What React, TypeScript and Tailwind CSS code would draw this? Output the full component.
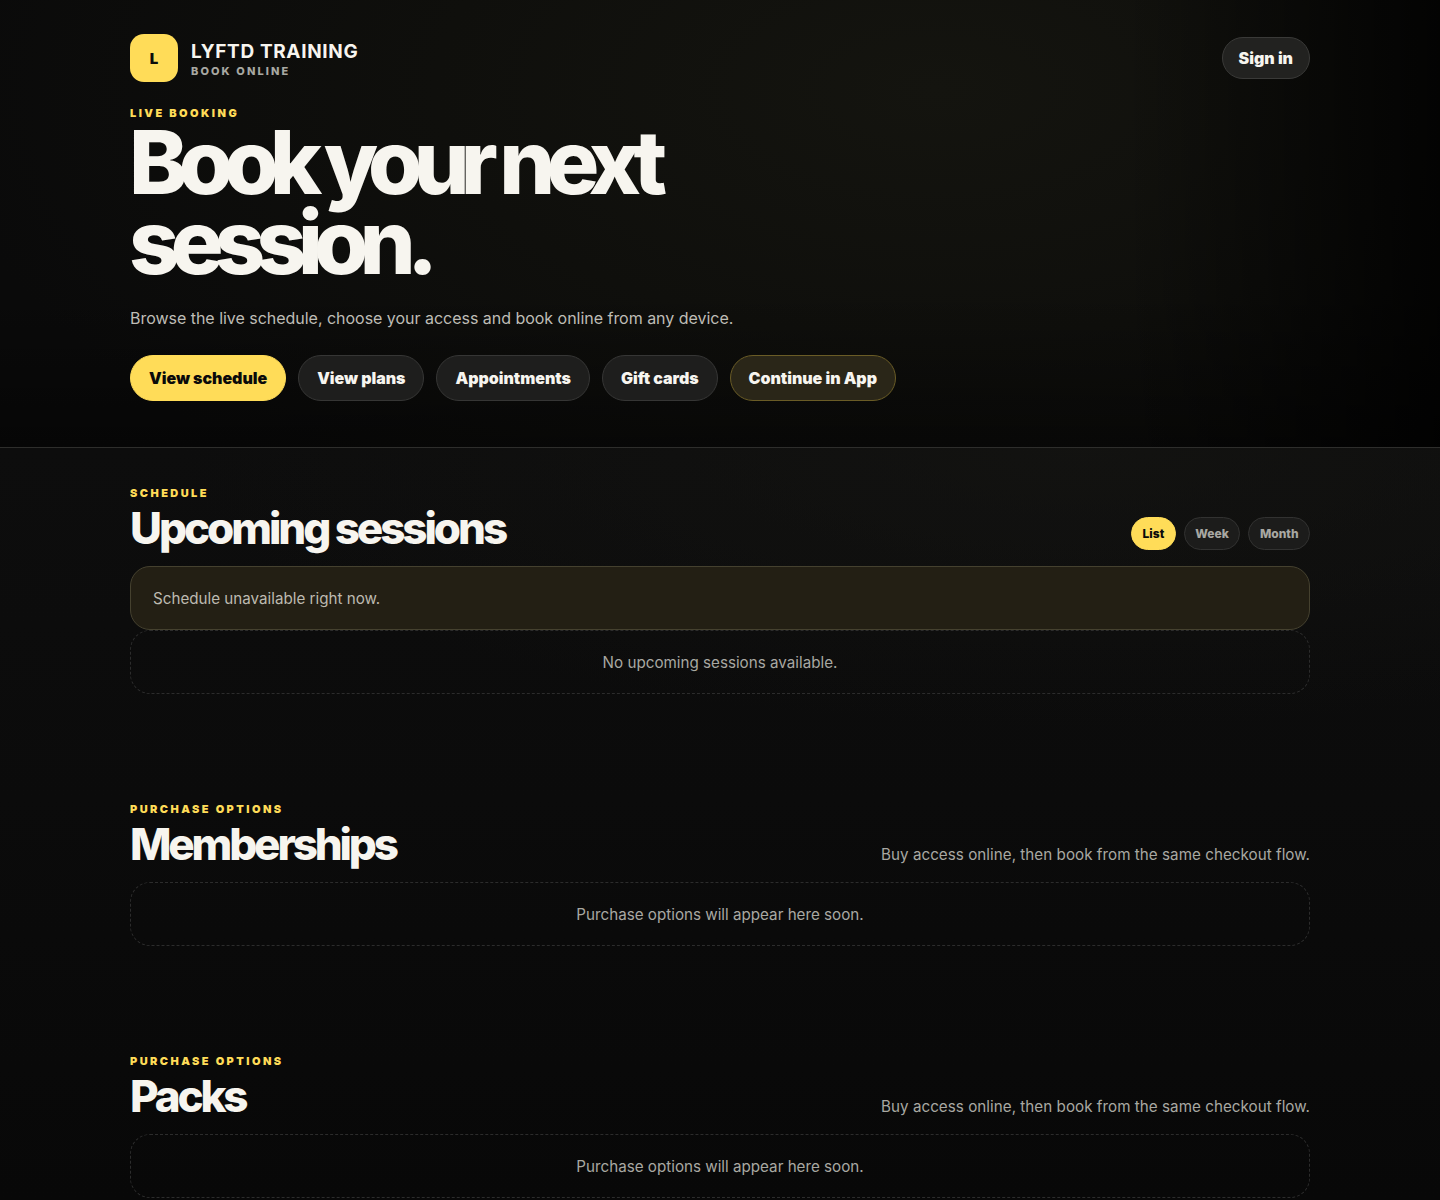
const font = "[font-family:Inter,'Liberation_Sans',sans-serif]";

function Eyebrow({ children }: { children: string }) {
  return (
    <div className="text-[11px] leading-[14px] font-black tracking-[0.222em] uppercase text-[#ffdc58]">
      {children}
    </div>
  );
}

function Empty({ children }: { children: string }) {
  return (
    <div className="h-16 pt-[2px] flex items-center justify-center rounded-[20px] border border-dashed border-[#2c2c2c] text-[15.2px] text-[#a8a8a2]">
      {children}
    </div>
  );
}

function PurchaseSection({ title }: { title: string }) {
  return (
    <section className="mt-[108px]">
      <Eyebrow>Purchase options</Eyebrow>
      <div className="flex items-end justify-between mb-[14px]">
        <h2 className="pt-1 text-[44px] leading-[48px] font-extrabold tracking-[-0.072em] text-[#f7f5ef]">{title}</h2>
        <p className="mb-px text-[15.2px] leading-6 tracking-[0.035px] text-[#a8a8a2]">Buy access online, then book from the same checkout flow.</p>
      </div>
      <Empty>Purchase options will appear here soon.</Empty>
    </section>
  );
}

function HeroButton({ children, variant }: { children: string; variant?: "primary" | "app" }) {
  const cls =
    variant === "primary"
      ? "bg-[#ffdc58] border-[#ffdc58] text-[#0a0a0a]"
      : variant === "app"
      ? "bg-[#2a2618] border-[#6a5c26] text-[#f7f5ef]"
      : "bg-[#1e1e1d] border-[#363635] text-[#f7f5ef]";
  return (
    <button className={`h-[46px] px-[18px] rounded-full border text-base font-black tracking-[-0.03px] ${cls}`}>
      {children}
    </button>
  );
}

function ViewPill({ children, active }: { children: string; active?: boolean }) {
  return (
    <button
      className={`h-[33px] px-[10.5px] rounded-full border text-xs font-extrabold ${
        active ? "bg-[#ffdc58] border-[#ffdc58] text-[#0a0a0a]" : "bg-[#1c1c1b] border-[#323231] text-[#a8a8a2]"
      }`}
    >
      {children}
    </button>
  );
}

export default function App() {
  return (
    <div className={`${font} min-h-[1200px] overflow-hidden bg-[radial-gradient(ellipse_900px_280px_at_75%_448px,#16161399_0%,#00000000_100%),linear-gradient(180deg,#0d0d0d_448px,#0b0b0b_800px,#080808_1200px)]`}>
      <header className="h-[448px] border-b border-[#2e2e2c] bg-[linear-gradient(90deg,#00000000_78%,#000000cc_100%),linear-gradient(180deg,#00000000_65%,#00000066_100%),radial-gradient(ellipse_1000px_500px_at_65%_20%,#14140f_0%,#0f0f0c_50%,#0a0a0a_100%)]">
        <div className="w-[1180px] mx-auto pt-[34px]">
          <div className="flex items-center justify-between">
            <div className="flex items-center gap-[13px]">
              <div className="w-12 h-12 pt-[2px] rounded-[14px] bg-[#ffdc58] flex items-center justify-center text-[15px] font-black text-[#0a0a0a]">L</div>
              <div>
                <div className="mt-px text-[19px] leading-[24px] font-bold tracking-[0.034em] text-[#f7f5ef]">LYFTD TRAINING</div>
                <div className="text-[11px] leading-[14px] font-extrabold tracking-[0.19em] text-[#a8a8a2]">BOOK ONLINE</div>
              </div>
            </div>
            <button className="h-[42px] px-4 rounded-full border border-[#3a3a38] bg-[#222220] text-base font-black text-[#f7f5ef]">Sign in</button>
          </div>
          <div className="mt-[24px]">
            <Eyebrow>Live booking</Eyebrow>
          </div>
          <h1 className="text-[88px] leading-[80px] font-extrabold tracking-[-0.1em] text-[#f7f5ef] mt-[2px] -ml-px w-[600px]">Book your next session.</h1>
          <p className="mt-[22px] text-base leading-7 tracking-[-0.025px] text-[#bfbdb6]">Browse the live schedule, choose your access and book online from any device.</p>
          <div className="flex gap-3 mt-[23px]">
            <HeroButton variant="primary">View schedule</HeroButton>
            <HeroButton>View plans</HeroButton>
            <HeroButton>Appointments</HeroButton>
            <HeroButton>Gift cards</HeroButton>
            <HeroButton variant="app">Continue in App</HeroButton>
          </div>
        </div>
      </header>
      <main className="w-[1180px] mx-auto pt-[38px]">
        <section>
          <Eyebrow>Schedule</Eyebrow>
          <div className="flex items-end justify-between mb-[14px]">
            <h2 className="pt-1 text-[44px] leading-[48px] font-extrabold tracking-[-0.07em] text-[#f7f5ef]">Upcoming sessions</h2>
            <div className="flex gap-2 mb-[2px]">
              <ViewPill active>List</ViewPill>
              <ViewPill>Week</ViewPill>
              <ViewPill>Month</ViewPill>
            </div>
          </div>
          <div className="h-16 pt-[2px] flex items-center px-[22px] rounded-[20px] border border-[#45412f] bg-[#231f14] text-[15.2px] text-[#bdbab0]">
            Schedule unavailable right now.
          </div>
          <Empty>No upcoming sessions available.</Empty>
        </section>
        <PurchaseSection title="Memberships" />
        <PurchaseSection title="Packs" />
      </main>
    </div>
  );
}
